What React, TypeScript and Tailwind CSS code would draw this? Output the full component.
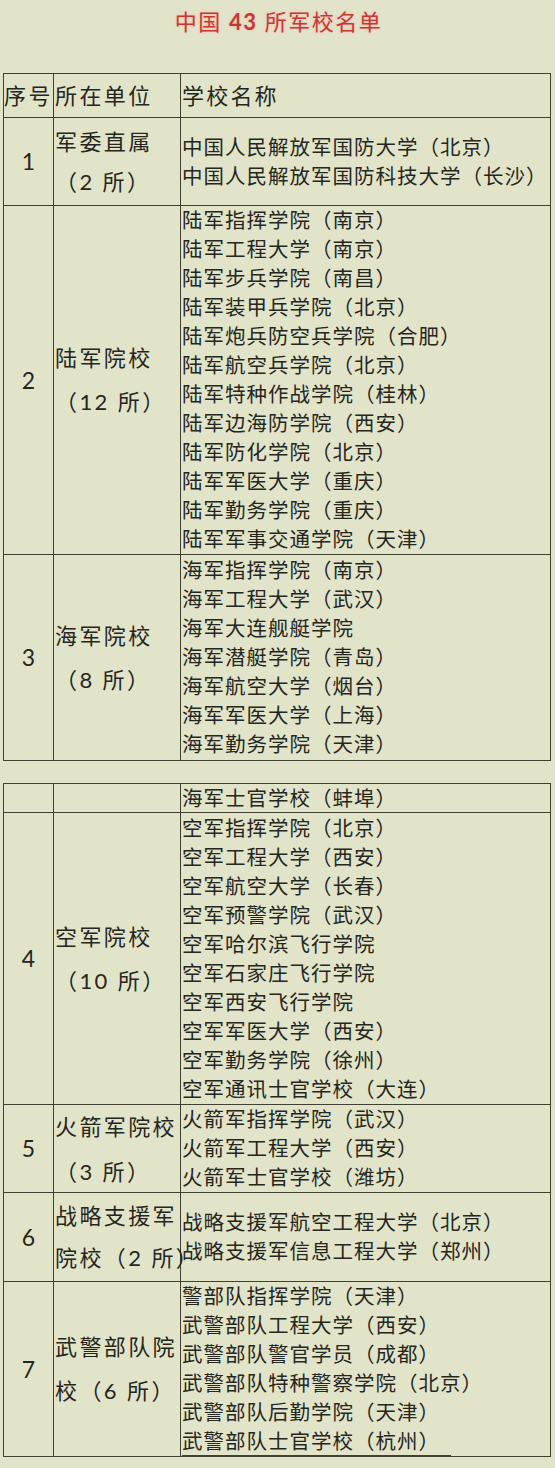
type Group = {
  no?: string;
  unit: string[];
  unitLeading?: string;
  schools: string[];
  height: string;
  underlineLast?: boolean;
};

const tableOne: Group[] = [
  {
    no: '1',
    unit: ['军委直属', '（2 所）'],
    unitLeading: 'leading-[40px]',
    schools: ['中国人民解放军国防大学（北京）', '中国人民解放军国防科技大学（长沙）'],
    height: 'h-[88px]',
  },
  {
    no: '2',
    unit: ['陆军院校', '（12 所）'],
    schools: [
      '陆军指挥学院（南京）',
      '陆军工程大学（南京）',
      '陆军步兵学院（南昌）',
      '陆军装甲兵学院（北京）',
      '陆军炮兵防空兵学院（合肥）',
      '陆军航空兵学院（北京）',
      '陆军特种作战学院（桂林）',
      '陆军边海防学院（西安）',
      '陆军防化学院（北京）',
      '陆军军医大学（重庆）',
      '陆军勤务学院（重庆）',
      '陆军军事交通学院（天津）',
    ],
    height: 'h-[349px]',
  },
  {
    no: '3',
    unit: ['海军院校', '（8 所）'],
    schools: [
      '海军指挥学院（南京）',
      '海军工程大学（武汉）',
      '海军大连舰艇学院',
      '海军潜艇学院（青岛）',
      '海军航空大学（烟台）',
      '海军军医大学（上海）',
      '海军勤务学院（天津）',
    ],
    height: 'h-[206px]',
  },
];

const tableTwo: Group[] = [
  {
    unit: [],
    schools: ['海军士官学校（蚌埠）'],
    height: 'h-[29px]',
  },
  {
    no: '4',
    unit: ['空军院校', '（10 所）'],
    schools: [
      '空军指挥学院（北京）',
      '空军工程大学（西安）',
      '空军航空大学（长春）',
      '空军预警学院（武汉）',
      '空军哈尔滨飞行学院',
      '空军石家庄飞行学院',
      '空军西安飞行学院',
      '空军军医大学（西安）',
      '空军勤务学院（徐州）',
      '空军通讯士官学校（大连）',
    ],
    height: 'h-[292px]',
  },
  {
    no: '5',
    unit: ['火箭军院校', '（3 所）'],
    unitLeading: 'leading-[45px]',
    schools: ['火箭军指挥学院（武汉）', '火箭军工程大学（西安）', '火箭军士官学校（潍坊）'],
    height: 'h-[88px]',
  },
  {
    no: '6',
    unit: ['战略支援军', '院校（2 所）'],
    unitLeading: 'leading-[42px]',
    schools: ['战略支援军航空工程大学（北京）', '战略支援军信息工程大学（郑州）'],
    height: 'h-[89px]',
  },
  {
    no: '7',
    unit: ['武警部队院', '校（6 所）'],
    schools: [
      '警部队指挥学院（天津）',
      '武警部队工程大学（西安）',
      '武警部队警官学员（成都）',
      '武警部队特种警察学院（北京）',
      '武警部队后勤学院（天津）',
      '武警部队士官学校（杭州）',
    ],
    height: 'h-[175px]',
    underlineLast: true,
  },
];

function GroupRow({ g }: { g: Group }) {
  return (
    <>
      <div className={`${g.height} flex items-center justify-center border-r border-b border-[#3f4032] text-[23px]`}>
        {g.no}
      </div>
      <div
        className={`${g.height} flex flex-col justify-center border-r border-b border-[#3f4032] pl-[1px] text-[22px] tracking-[2.4px] whitespace-nowrap ${g.unitLeading ?? 'leading-[44px]'}`}
      >
        {g.unit.map((u, i) => (
          <div key={i}>{u}</div>
        ))}
      </div>
      <div
        className={`${g.height} flex flex-col justify-center border-r border-b border-[#3f4032] pl-[1px] text-[20.5px] leading-[29px] tracking-[1px] whitespace-nowrap`}
      >
        {g.schools.map((s, i) => (
          <div
            key={i}
            className={g.underlineLast && i === g.schools.length - 1 ? 'w-[269px] border-b border-[#3f4032] leading-[28px]' : ''}
          >
            {s}
          </div>
        ))}
      </div>
    </>
  );
}

function SchoolTable({ groups, header }: { groups: Group[]; header?: boolean }) {
  return (
    <div className="ml-[3px] grid w-[548px] grid-cols-[50px_127px_370px] border-t border-l border-[#3f4032]">
      {header && (
        <>
          <div className="flex h-[44px] items-center border-r border-b border-[#3f4032] text-[22px] tracking-[2.4px] whitespace-nowrap">
            序号
          </div>
          <div className="flex h-[44px] items-center border-r border-b border-[#3f4032] pl-[1px] text-[22px] tracking-[2.4px]">
            所在单位
          </div>
          <div className="flex h-[44px] items-center border-r border-b border-[#3f4032] pl-[1px] text-[22px] tracking-[2.2px]">
            学校名称
          </div>
        </>
      )}
      {groups.map((g, i) => (
        <GroupRow key={i} g={g} />
      ))}
    </div>
  );
}

export default function App() {
  return (
    <div className="h-[1468px] w-[555px] overflow-hidden bg-[#e2e4c9] font-['Lato','Noto_Sans_CJK_SC',sans-serif] text-[#25261e]">
      <div className="flex h-[42px] items-center justify-center pl-[2px]">
        <h1 className="text-[22px] tracking-[1.5px] text-[#c23a36] [text-shadow:0_0_3px_rgba(255,170,170,0.9)]">
          中国 <span className="font-bold">43</span> 所军校名单
        </h1>
      </div>
      <div className="mt-[31px]">
        <SchoolTable groups={tableOne} header />
      </div>
      <div className="mt-[22px]">
        <SchoolTable groups={tableTwo} />
      </div>
    </div>
  );
}
